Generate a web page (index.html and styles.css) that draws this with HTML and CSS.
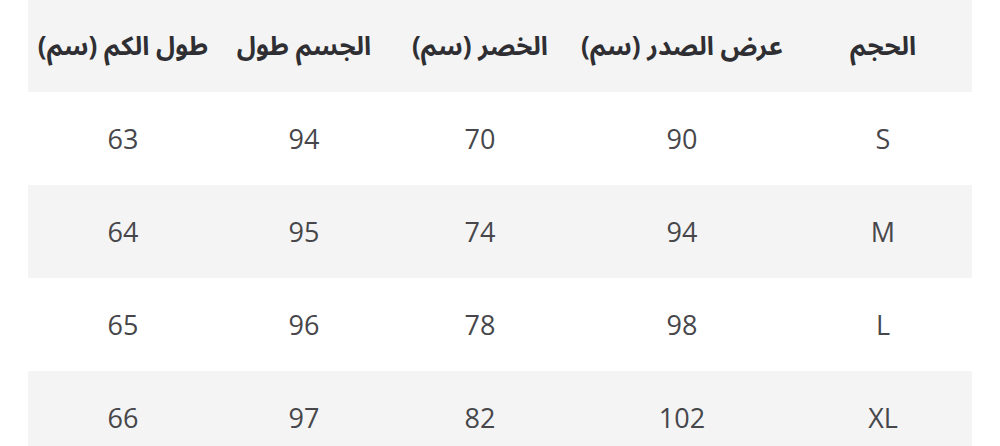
FILE: index.html
```html
<!DOCTYPE html>
<html lang="ar" dir="rtl">
<head>
<meta charset="utf-8">
<link rel="stylesheet" href="styles.css">
</head>
<body>
<table class="size-table">
  <colgroup>
    <col class="c1"><col class="c2"><col class="c3"><col class="c4"><col class="c5">
  </colgroup>
  <thead>
    <tr>
      <th>الحجم</th>
      <th>عرض الصدر (سم)</th>
      <th>الخصر (سم)</th>
      <th>الجسم طول</th>
      <th>طول الكم (سم)</th>
    </tr>
  </thead>
  <tbody>
    <tr><td>S</td><td>90</td><td>70</td><td>94</td><td>63</td></tr>
    <tr class="alt"><td>M</td><td>94</td><td>74</td><td>95</td><td>64</td></tr>
    <tr><td>L</td><td>98</td><td>78</td><td>96</td><td>65</td></tr>
    <tr class="alt"><td>XL</td><td>102</td><td>82</td><td>97</td><td>66</td></tr>
  </tbody>
</table>
</body>
</html>
```
FILE: styles.css
```css
html, body {
  margin: 0;
  padding: 0;
  background: #ffffff;
}
body {
  padding: 0 28px;
}
.size-table {
  width: 944px;
  border-collapse: collapse;
  table-layout: fixed;
  font-family: "Open Sans", "Noto Sans Arabic", "Noto Sans", "DejaVu Sans", sans-serif;
}
.c1 { width: 178px; }
.c2 { width: 224px; }
.c3 { width: 180px; }
.c4 { width: 172px; }
.c5 { width: 190px; }
.size-table th {
  height: 92px;
  padding: 0;
  background: #f4f4f4;
  color: #2f2f33;
  font-weight: 700;
  font-size: 26px;
  text-align: center;
  vertical-align: middle;
}
.size-table td {
  height: 93px;
  padding: 0;
  color: #47474b;
  font-size: 27px;
  text-align: center;
  vertical-align: middle;
}
.size-table tr.alt td {
  background: #f4f4f4;
}
```
